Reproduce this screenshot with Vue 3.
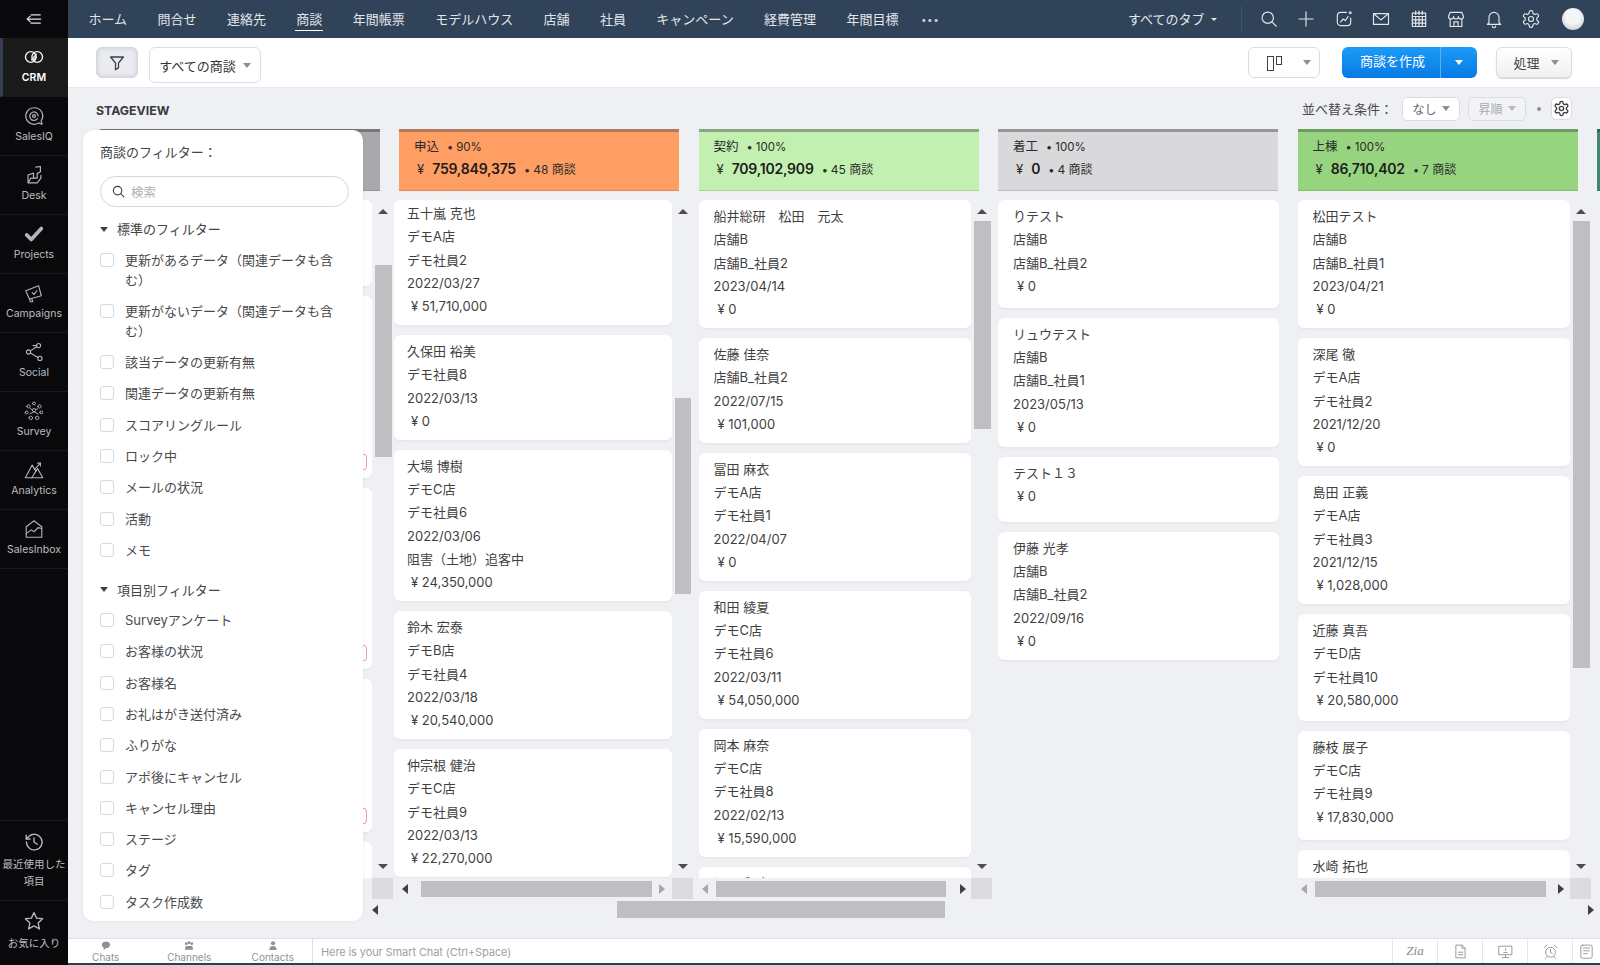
<script setup>
import { h } from 'vue'

const c = (x, y, r) => `M${x - r} ${y}a${r} ${r} 0 1 0 ${2 * r} 0a${r} ${r} 0 1 0 ${-2 * r} 0z`

const icons = {
  menu: ['M4 12h16', 'M7.5 8.5L4 12l3.5 3.5', 'M8.5 7h11', 'M8.5 17h11'],
  crm: [c(8.5, 12, 5.8), c(15.5, 12, 5.8), 'M9.5 15l5-6', 'M11.5 15.5l3-3.5'],
  salesiq: ['M12 3a9 9 0 1 0 5 16.5l3.8 1.5-1-3.8A9 9 0 0 0 12 3z', 'M15.8 14.8a4.6 4.6 0 1 1 .8-2.8', c(12, 12, 1.6)],
  desk: ['M14 3.5l5-.8v5.8l-3.5 2v5H8.5l-3 5h10l4-5v-3', 'M5.5 20v-8l6-2v5'],
  projects: ['M4 13l5 5L20 6'],
  campaigns: ['M3 9.5L17 4l3 11-13 3.5z', 'M7 18.5l1 3h2.5l-1-3.6', 'M10 11.5l2 2 3.2-4'],
  social: [c(17, 5, 2.3), c(6, 12, 2.3), c(18.5, 19, 2.3), 'M8 10.8l7-4.6', 'M8.2 13l8.2 5', 'M14.7 5H11'],
  survey: [c(12, 3.8, 1.6), c(6, 7, 1.8), c(18, 7, 1.8), c(4, 13.5, 1.6), c(20, 13.5, 1.6), c(8.5, 19.5, 1.9), c(15.5, 19.5, 1.9), c(12, 11, 1.8), 'M7.5 15l4.5-2 4.5 2', 'M8 9.5l2 1M16 9.5l-2 1'],
  analytics: ['M2.5 20.5L10 6.5l4 7 2-3 5.5 10z', 'M14 13.5l-4.5 7', 'M12.5 11.5L19 4.5', 'M16 4.5h3v3'],
  salesinbox: ['M3.5 21V9.5L12 3l8.5 6.5V21z', 'M3.5 17l5.5-4 3 2 4.5-4.5 4 1'],
  recent: ['M3.8 12a8.5 8.5 0 1 0 2.6-6L3.5 8.6', 'M3.5 4.5v4.2h4.2', 'M12 7.5V12l3.5 2.5'],
  star: ['M12 2.8l2.8 6.1 6.6.7-4.9 4.5 1.4 6.6L12 17.4l-5.9 3.3 1.4-6.6L2.6 9.6l6.6-.7z'],
  search: [c(10.5, 10.5, 6.8), 'M15.5 15.5l5.2 5.2'],
  plus: ['M12 3.5v17', 'M3.5 12h17'],
  signal: ['M20 11v5a4 4 0 0 1-4 4H8a4 4 0 0 1-4-4V8a4 4 0 0 1 4-4h7', 'M8 15.5l3-3.5 2.5 2L17 9', c(19.5, 4.5, 1.2)],
  mail: ['M3 5.5h18v13H3z', 'M3.5 6l8.5 7 8.5-7'],
  calendar: ['M4 5h16v16H4z', 'M4 9h16', 'M8 2.5v4M12 2.5v4M16 2.5v4', 'M8 9v12M12 9v12M16 9v12', 'M4 13h16M4 17h16'],
  store: ['M5 4h14l2 5a3 3 0 0 1-6 0 3 3 0 0 1-6 0 3 3 0 0 1-6 0z', 'M5 12v9h14v-9', 'M9.5 21v-5.5h5V21'],
  bell: ['M6 16.5V10a6 6 0 0 1 12 0v6.5l2 2H4z', 'M10 20.5a2 2 0 0 0 4 0'],
  gear: ['M12.22 2h-.44a2 2 0 0 0-2 2v.18a2 2 0 0 1-1 1.73l-.43.25a2 2 0 0 1-2 0l-.15-.08a2 2 0 0 0-2.73.73l-.22.38a2 2 0 0 0 .73 2.73l.15.1a2 2 0 0 1 1 1.72v.51a2 2 0 0 1-1 1.74l-.15.09a2 2 0 0 0-.73 2.73l.22.38a2 2 0 0 0 2.73.73l.15-.08a2 2 0 0 1 2 0l.43.25a2 2 0 0 1 1 1.73V20a2 2 0 0 0 2 2h.44a2 2 0 0 0 2-2v-.18a2 2 0 0 1 1-1.73l.43-.25a2 2 0 0 1 2 0l.15.08a2 2 0 0 0 2.73-.73l.22-.39a2 2 0 0 0-.73-2.73l-.15-.08a2 2 0 0 1-1-1.74v-.5a2 2 0 0 1 1-1.74l.15-.09a2 2 0 0 0 .73-2.73l-.22-.38a2 2 0 0 0-2.73-.73l-.15.08a2 2 0 0 1-2 0l-.43-.25a2 2 0 0 1-1-1.73V4a2 2 0 0 0-2-2z', c(12, 12, 3)],
  funnel: ['M3.5 4h17l-6.5 8v6.5L10 21v-9z'],
  chats: ['M12 3c5 0 9 3.2 9 7.5S17 18 12 18l-5 3.5V17c-2.500-1.300-4-3.700-4-6.500C3 6.200 7 3 12 3z'],
  channels: [c(6, 8, 3), c(18, 8, 3), c(12, 6, 3.2), 'M5 13h14l2 8H3z'],
  contacts: [c(12, 7, 4.5), 'M4 22c0-6 3-9 8-9s8 3 8 9z'],
  doc: ['M6 3h8l4.500 4.500V21H6z', 'M14 3v4.500h4.500', 'M9 13h6.500M9 16.500h6.500'],
  screen: ['M3 4.500h18v12H3z', 'M12 16.500V20M7.500 20.500h9', 'M9.500 13.500h5', 'M12 8v2.500'],
  alarm: [c(12, 13, 7), 'M12 9v4.200l2.500 1.500', 'M3.500 6l3.500-3M20.500 6L17 3', 'M7 19l-2 2.500M17 19l2 2.500'],
  notes: ['M6.500 3h11a2.500 2.500 0 0 1 2.500 2.500V19a2.500 2.500 0 0 1-2.500 2.500h-11A2.500 2.500 0 0 1 4 19V5.500A2.500 2.500 0 0 1 6.500 3z', 'M7.500 7h9', 'M8 11h8M8 15h5'],
}

const Icon = (props) =>
  h(
    'svg',
    {
      viewBox: '0 0 24 24',
      fill: props.solid ? 'currentColor' : 'none',
      stroke: props.solid ? 'none' : 'currentColor',
      'stroke-width': props.sw || 1.5,
      'stroke-linecap': 'round',
      'stroke-linejoin': 'round',
    },
    icons[props.name].map((d) => h('path', { d })),
  )
Icon.props = ['name', 'sw', 'solid']

const sideItems = [
  { label: 'CRM', icon: 'crm', active: true },
  { label: 'SalesIQ', icon: 'salesiq', sw: 1.3 },
  { label: 'Desk', icon: 'desk', sw: 1.3 },
  { label: 'Projects', icon: 'projects', sw: 4 },
  { label: 'Campaigns', icon: 'campaigns', sw: 1.2 },
  { label: 'Social', icon: 'social', sw: 1.2 },
  { label: 'Survey', icon: 'survey', sw: 1 },
  { label: 'Analytics', icon: 'analytics', sw: 1.2 },
  { label: 'SalesInbox', icon: 'salesinbox', sw: 1.2 },
]

const navLinks = ['ホーム', '問合せ', '連絡先', '商談', '年間帳票', 'モデルハウス', '店舗', '社員', 'キャンペーン', '経費管理', '年間目標']
const navIcons = ['search', 'plus', 'signal', 'mail', 'calendar', 'store', 'bell', 'gear']

const standardFilters = [
  '更新があるデータ（関連データも含む）',
  '更新がないデータ（関連データも含む）',
  '該当データの更新有無',
  '関連データの更新有無',
  'スコアリングルール',
  'ロック中',
  'メールの状況',
  '活動',
  'メモ',
]
const fieldFilters = ['Surveyアンケート', 'お客様の状況', 'お客様名', 'お礼はがき送付済み', 'ふりがな', 'アポ後にキャンセル', 'キャンセル理由', 'ステージ', 'タグ', 'タスク作成数']

const columns = [
  {
    id: 'prev',
    tone: 'gray-dark',
    spacers: [
      { height: 86 },
      { height: 182, tag: true },
      { height: 181, tag: true },
      { height: 153, tag: true },
      { height: 60 },
    ],
    thumb: { top: 65, height: 192 },
    cornerOnly: true,
  },
  {
    id: 'apply',
    name: '申込',
    pct: '90%',
    total: '759,849,375',
    count: '48 商談',
    tone: 'orange',
    scrolled: true,
    thumb: { top: 198, height: 196 },
    hbar: { pad: 8, gap: 13, width: 231, right: 7, dimRight: true },
    cards: [
      { rows: ['五十嵐 克也', 'デモA店', 'デモ社員2', '2022/03/27', '¥ 51,710,000'], trim: 3 },
      { rows: ['久保田 裕美', 'デモ社員8', '2022/03/13', '¥ 0'] },
      { rows: ['大場 博樹', 'デモC店', 'デモ社員6', '2022/03/06', '阻害（土地）追客中', '¥ 24,350,000'] },
      { rows: ['鈴木 宏泰', 'デモB店', 'デモ社員4', '2022/03/18', '¥ 20,540,000'] },
      { rows: ['仲宗根 健治', 'デモC店', 'デモ社員9', '2022/03/13', '¥ 22,270,000'] },
    ],
  },
  {
    id: 'contract',
    name: '契約',
    pct: '100%',
    total: '709,102,909',
    count: '45 商談',
    tone: 'green-light',
    thumb: { top: 21, height: 208 },
    hbar: { pad: 3, gap: 8, width: 230, right: 14, dimLeft: true },
    cards: [
      { rows: ['船井総研　松田　元太', '店舗B', '店舗B_社員2', '2023/04/14', '¥ 0'] },
      { rows: ['佐藤 佳奈', '店舗B_社員2', '2022/07/15', '¥ 101,000'] },
      { rows: ['冨田 麻衣', 'デモA店', 'デモ社員1', '2022/04/07', '¥ 0'] },
      { rows: ['和田 綾夏', 'デモC店', 'デモ社員6', '2022/03/11', '¥ 54,050,000'] },
      { rows: ['岡本 麻奈', 'デモC店', 'デモ社員8', '2022/02/13', '¥ 15,590,000'] },
      { rows: ['深田 和也'] },
    ],
  },
  {
    id: 'start',
    name: '着工',
    pct: '100%',
    total: '0',
    count: '4 商談',
    tone: 'gray',
    cards: [
      { rows: ['りテスト', '店舗B', '店舗B_社員2', '¥ 0'], extra: 3 },
      { rows: ['リュウテスト', '店舗B', '店舗B_社員1', '2023/05/13', '¥ 0'], extra: 1 },
      { rows: ['テスト１３', '¥ 0'], extra: 7 },
      { rows: ['伊藤 光孝', '店舗B', '店舗B_社員2', '2022/09/16', '¥ 0'] },
    ],
  },
  {
    id: 'done',
    name: '上棟',
    pct: '100%',
    total: '86,710,402',
    count: '7 商談',
    tone: 'green',
    thumb: { top: 21, height: 447 },
    hbar: { pad: 3, gap: 8, width: 231, right: 12, dimLeft: true },
    cards: [
      { rows: ['松田テスト', '店舗B', '店舗B_社員1', '2023/04/21', '¥ 0'] },
      { rows: ['深尾 徹', 'デモA店', 'デモ社員2', '2021/12/20', '¥ 0'] },
      { rows: ['島田 正義', 'デモA店', 'デモ社員3', '2021/12/15', '¥ 1,028,000'] },
      { rows: ['近藤 真吾', 'デモD店', 'デモ社員10', '¥ 20,580,000'], extra: 2 },
      { rows: ['藤枝 展子', 'デモC店', 'デモ社員9', '¥ 17,830,000'], extra: 5 },
      { rows: ['水崎 拓也', 'デモA店'] },
    ],
  },
  { id: 'next', tone: 'teal' },
]

const chatTabs = [
  { label: 'Chats', icon: 'chats' },
  { label: 'Channels', icon: 'channels' },
  { label: 'Contacts', icon: 'contacts' },
]
const chatTools = ['doc', 'screen', 'alarm', 'notes']

function cardStyle(card) {
  const style = {}
  if (card.trim) style.paddingTop = 5 - card.trim + 'px'
  if (card.extra) style.paddingBottom = 6.5 + card.extra + 'px'
  return style
}
</script>

<template>
  <div class="app">
    <aside class="sidebar">
      <div class="side-top"><Icon name="menu" class="side-menu" /></div>
      <div v-for="item in sideItems" :key="item.label" :class="['side-item', { active: item.active }]">
        <Icon :name="item.icon" :sw="item.sw" class="side-icon" />
        <span>{{ item.label }}</span>
      </div>
      <div class="side-bottom">
        <div class="side-recent">
          <Icon name="recent" class="side-icon" />
          <span>最近使用した<br />項目</span>
        </div>
        <div class="side-fav">
          <Icon name="star" class="side-icon star" />
          <span>お気に入り</span>
        </div>
      </div>
    </aside>

    <div class="main">
      <header class="topnav">
        <nav class="nav-links">
          <a v-for="link in navLinks" :key="link" :class="{ current: link === '商談' }">{{ link }}</a>
          <a class="nav-more">•••</a>
        </nav>
        <div class="nav-tabs">すべてのタブ<i class="caret caret-light"></i></div>
        <div class="nav-icons">
          <Icon v-for="name in navIcons" :key="name" :name="name" :sw="1.4" class="nav-icon" />
        </div>
        <div class="avatar"></div>
      </header>

      <div class="toolbar">
        <button class="btn-filter"><Icon name="funnel" :sw="1.7" /></button>
        <button class="btn-view-select">すべての商談<i class="caret"></i></button>
        <div class="toolbar-right">
          <button class="btn-layout">
            <span class="layout-tall"></span><span class="layout-short"></span>
            <i class="caret"></i>
          </button>
          <div class="btn-create">
            <span class="create-label">商談を作成</span>
            <span class="create-drop"><i class="caret caret-white"></i></span>
          </div>
          <button class="btn-action">処理<i class="caret"></i></button>
        </div>
      </div>

      <section class="stage">
        <div class="stage-head">
          <h1>STAGEVIEW</h1>
          <div class="sort">
            <span class="sort-label">並べ替え条件：</span>
            <span class="sort-box">なし<i class="caret"></i></span>
            <span class="sort-box disabled">昇順<i class="caret"></i></span>
            <span class="sort-dot"></span>
            <span class="sort-gear"><Icon name="gear" :sw="1.9" /></span>
          </div>
        </div>

        <div class="board">
          <div v-for="col in columns" :key="col.id" class="column">
            <div :class="['col-head', col.tone]">
              <template v-if="col.name">
                <div class="col-name">{{ col.name }}<span class="dot-meta">•</span><span class="col-pct">{{ col.pct }}</span></div>
                <div class="col-total">
                  <span class="yen">¥</span><b>{{ col.total }}</b><span class="dot-meta">•</span><span class="col-count">{{ col.count }}</span>
                </div>
              </template>
            </div>

            <template v-if="col.cards || col.spacers">
              <div :class="['col-body', { scrolled: col.scrolled, full: !col.thumb }]">
                <div class="card-list">
                  <template v-if="col.spacers">
                    <div v-for="(s, i) in col.spacers" :key="i" class="card" :style="{ height: s.height + 'px' }">
                      <span v-if="s.tag" class="card-tag"></span>
                    </div>
                  </template>
                  <div v-for="card in col.cards" :key="card.rows[0]" class="card" :style="cardStyle(card)">
                    <div v-for="row in card.rows" :key="row" :class="['card-row', { amount: row[0] === '¥' }]">{{ row }}</div>
                  </div>
                </div>
                <div v-if="col.thumb" class="vbar">
                  <i class="tri-up"></i>
                  <span class="vbar-thumb" :style="{ top: col.thumb.top + 'px', height: col.thumb.height + 'px' }"></span>
                  <i class="tri-down"></i>
                </div>
              </div>
              <div v-if="col.thumb" :class="['hbar', { scrolled: col.scrolled }]">
                <div v-if="col.hbar" class="hbar-track" :style="{ paddingLeft: col.hbar.pad + 'px' }">
                  <i :class="['tri-left', { dim: col.hbar.dimLeft }]"></i>
                  <span class="hbar-thumb" :style="{ marginLeft: col.hbar.gap + 'px', width: col.hbar.width + 'px' }"></span>
                  <i :class="['tri-right', { dim: col.hbar.dimRight }]" :style="{ marginLeft: col.hbar.right + 'px' }"></i>
                </div>
                <div v-else class="hbar-track"></div>
                <span class="hbar-corner"></span>
              </div>
            </template>
          </div>
        </div>

        <div class="board-scroll">
          <i class="tri-left"></i>
          <span class="board-thumb"></span>
          <i class="tri-right board-next"></i>
        </div>

        <aside class="filter-panel">
          <div class="filter-title">商談のフィルター：</div>
          <div class="filter-search">
            <Icon name="search" :sw="1.8" />
            <span>検索</span>
          </div>
          <div class="filter-group"><i class="tri-down"></i>標準のフィルター</div>
          <label v-for="f in standardFilters" :key="f" class="filter-row">
            <span class="check"></span><span class="filter-text">{{ f }}</span>
          </label>
          <div class="filter-group second"><i class="tri-down"></i>項目別フィルター</div>
          <label v-for="f in fieldFilters" :key="f" class="filter-row">
            <span class="check"></span><span class="filter-text">{{ f }}</span>
          </label>
        </aside>
      </section>

      <footer class="chatbar">
        <div class="chat-tabs">
          <div v-for="tab in chatTabs" :key="tab.label" class="chat-tab">
            <Icon :name="tab.icon" :solid="true" />
            <span>{{ tab.label }}</span>
          </div>
        </div>
        <div class="chat-input">Here is your Smart Chat (Ctrl+Space)</div>
        <div class="chat-tool zia">Zia</div>
        <div v-for="name in chatTools" :key="name" class="chat-tool">
          <Icon :name="name" :sw="1.2" />
        </div>
      </footer>
    </div>
  </div>
</template>

<style>
html,
body {
  margin: 0;
  background: #eff0f3;
}
</style>

<style scoped>
.app {
  display: flex;
  width: 1600px;
  height: 965px;
  overflow: hidden;
  font-family: Inter, "Noto Sans CJK JP", sans-serif;
  font-size: 13px;
  color: #3f3f42;
}
h1,
button {
  margin: 0;
  font-family: inherit;
}
i {
  display: inline-block;
}

/* side rail */
.sidebar {
  width: 68px;
  flex-shrink: 0;
  display: flex;
  flex-direction: column;
  background: #09090b;
  color: #bdbdc3;
  font-size: 10.5px;
}
.side-top {
  height: 38px;
  display: flex;
  align-items: center;
  justify-content: center;
}
.side-menu {
  width: 20px;
  height: 20px;
  color: #e2e2e6;
}
.side-item {
  height: 59px;
  box-sizing: border-box;
  padding-top: 8px;
  display: flex;
  flex-direction: column;
  align-items: center;
  gap: 3px;
  border-bottom: 1px solid #18181b;
  line-height: 14px;
}
.side-item.active {
  background: #1a1a1b;
  border-left: 3px solid #333e52;
  color: #fff;
  font-weight: 600;
  padding-right: 3px;
}
.side-icon {
  width: 22px;
  height: 22px;
  color: #b4b4ba;
}
.side-item.active .side-icon {
  color: #f2f2f2;
}
.side-bottom {
  margin-top: auto;
  text-align: center;
  font-size: 10.5px;
}
.side-recent {
  height: 81px;
  box-sizing: border-box;
  padding-top: 10px;
  border-top: 1px solid #18181b;
  border-bottom: 1px solid #18181b;
  display: flex;
  flex-direction: column;
  align-items: center;
  line-height: 17px;
  gap: 3px;
}
.side-fav {
  height: 64px;
  box-sizing: border-box;
  padding-top: 9px;
  display: flex;
  flex-direction: column;
  align-items: center;
  gap: 3px;
}
.star {
  width: 22px;
  height: 22px;
}

.main {
  flex: 1;
  min-width: 0;
  display: flex;
  flex-direction: column;
}

/* top nav */
.topnav {
  height: 38px;
  flex-shrink: 0;
  display: flex;
  align-items: center;
  padding-left: 20.5px;
  background: #304358;
  color: #e2e6eb;
}
.nav-links {
  display: flex;
  gap: 30.4px;
}
.nav-links a {
  position: relative;
  line-height: 20px;
}
.nav-links a.current::after {
  content: "";
  position: absolute;
  left: -1px;
  right: -1px;
  bottom: -2px;
  height: 1px;
  background: #fff;
}
.nav-more {
  margin-left: -8px;
  font-size: 10px;
  letter-spacing: 0.5px;
  color: #c5ccd4;
}
.nav-tabs {
  margin-left: auto;
  padding-right: 24px;
  border-right: 1px solid #3f5267;
  line-height: 26px;
  display: flex;
  align-items: center;
  gap: 6px;
}
.nav-icons {
  display: flex;
  gap: 17.5px;
  margin-left: 17px;
}
.nav-icon {
  width: 20px;
  height: 20px;
}
.avatar {
  width: 22px;
  height: 22px;
  margin: 0 16px 0 21px;
  border-radius: 50%;
  background: radial-gradient(circle at 50% 40%, #f4f5f7 40%, #b9c0ca 100%);
}

/* carets */
.caret {
  width: 0;
  height: 0;
  border-left: 4.5px solid transparent;
  border-right: 4.5px solid transparent;
  border-top: 5px solid #8e8e92;
}
.caret-light {
  border-left-width: 3px;
  border-right-width: 3px;
  border-top: 3.5px solid #e2e6eb;
}
.caret-white {
  border-top-color: #fff;
}

/* toolbar */
.toolbar {
  height: 50px;
  flex-shrink: 0;
  box-sizing: border-box;
  padding: 9px 28px 0;
  display: flex;
  align-items: flex-start;
  background: #fff;
  border-bottom: 1px solid #e6e7ea;
}
.btn-filter {
  width: 42px;
  height: 31px;
  padding: 0;
  border: 1px solid #d4d6db;
  border-radius: 6px;
  background: #e9ebf0;
  box-shadow: inset 0 0 4px #c6c9d0;
  color: #3c3f46;
  display: flex;
  align-items: center;
  justify-content: center;
}
.btn-filter svg {
  width: 18px;
  height: 18px;
}
.btn-view-select {
  margin-left: 11px;
  width: 112px;
  height: 36px;
  padding: 0;
  box-sizing: border-box;
  border: 1px solid #dcdde1;
  border-radius: 6px;
  background: #fff;
  color: #333;
  font-size: 13px;
  display: flex;
  align-items: center;
  justify-content: center;
  gap: 7px;
}
.toolbar-right {
  margin-left: auto;
  display: flex;
}
.btn-layout {
  width: 72px;
  height: 31px;
  padding: 0 8px 0 18px;
  border: 1px solid #dcdde1;
  border-radius: 6px;
  background: #fff;
  display: flex;
  align-items: flex-start;
  gap: 2px;
}
.layout-tall {
  width: 5px;
  height: 13px;
  margin-top: 8px;
  border: 1.2px solid #3f3f42;
}
.layout-short {
  width: 4px;
  height: 7px;
  margin-top: 8px;
  border: 1.2px solid #3f3f42;
}
.btn-layout .caret {
  margin: 12px 0 0 auto;
  margin-right: 0;
}
.btn-create {
  margin-left: 22px;
  width: 135px;
  height: 31px;
  display: flex;
  border-radius: 6px;
  background: linear-gradient(#1b9cf6, #0879e6);
  color: #fff;
  overflow: hidden;
}
.create-label {
  width: 99px;
  box-sizing: border-box;
  padding-left: 3px;
  text-align: center;
  line-height: 29px;
  border-right: 1px solid #56b0f3;
}
.create-drop {
  flex: 1;
  display: flex;
  align-items: center;
  justify-content: center;
}
.btn-action {
  margin-left: 19px;
  width: 76px;
  height: 31px;
  padding: 0 0 0 4px;
  border: 1px solid #dcdde1;
  border-radius: 6px;
  background: linear-gradient(#fff, #f0f0f2);
  box-shadow: 0 1px 1px #d5d5d8;
  color: #444;
  font-size: 13px;
  display: flex;
  align-items: center;
  justify-content: center;
  gap: 11px;
}

/* stage */
.stage {
  position: relative;
  flex: 1;
  min-height: 0;
  display: flex;
  flex-direction: column;
  background: #eff0f3;
}
.stage-head {
  height: 41px;
  flex-shrink: 0;
  box-sizing: border-box;
  padding: 0 28px 0 28px;
  display: flex;
  align-items: center;
}
.stage-head h1 {
  font-size: 12.3px;
  font-weight: 700;
  color: #3a3a3d;
  margin-top: 4px;
}
.sort {
  margin-left: auto;
  display: flex;
  align-items: center;
  color: #4a4a4d;
}
.sort-label {
  width: 100px;
}
.sort-box {
  width: 58px;
  height: 24px;
  box-sizing: border-box;
  margin-right: 8px;
  border: 1px solid #dcdde1;
  border-radius: 5px;
  background: #fff;
  font-size: 12px;
  color: #666;
  display: flex;
  align-items: center;
  justify-content: center;
  gap: 5px;
}
.sort-box.disabled {
  background: #f2f3f5;
  color: #a9a9ad;
  margin-right: 11px;
}
.sort-box.disabled .caret {
  border-top-color: #b9b9bd;
}
.sort-dot {
  width: 4px;
  height: 4px;
  background: #8e8e92;
  border-radius: 50%;
  margin-right: 10px;
}
.sort-gear {
  width: 21px;
  height: 23px;
  box-sizing: border-box;
  border: 1px solid #dcdde1;
  border-radius: 5px;
  background: #fff;
  color: #3a3a3d;
  display: flex;
  align-items: center;
  justify-content: center;
}
.sort-gear svg {
  width: 17px;
  height: 17px;
}

/* board */
.board {
  height: 770px;
  flex-shrink: 0;
  padding-left: 31.5px;
  display: flex;
  gap: 6px;
  overflow: hidden;
}
.column {
  width: 293.5px;
  flex-shrink: 0;
}
.col-head {
  width: 280px;
  height: 62px;
  box-sizing: border-box;
  padding: 4px 0 0 15px;
  border-top: 3px solid #000;
  border-bottom: 1px solid rgba(0, 0, 0, 0.12);
  color: #2b2b2b;
  margin-bottom: 9px;
}
.gray-dark {
  background: #a9a9ad;
  border-top-color: #77777c;
}
.orange {
  background: #ff9e63;
  border-top-color: #af7a5c;
}
.green-light {
  background: #c1f0b0;
  border-top-color: #8aa484;
}
.gray {
  background: #d9d9db;
  border-top-color: #97979a;
}
.green {
  background: #97d480;
  border-top-color: #6f9a64;
}
.teal {
  background: #3f8677;
  border-top-color: #2f6559;
}
.col-name {
  font-size: 12.5px;
  line-height: 21px;
}
.col-pct {
  font-size: 11.5px;
}
.col-total {
  line-height: 22px;
  font-size: 12px;
  display: flex;
  align-items: baseline;
}
.col-total b {
  font-size: 14px;
  font-weight: 600;
  letter-spacing: -0.2px;
  color: #1c1c1c;
}
.yen {
  margin: 0 8px 0 3px;
  font-size: 13px;
}
.dot-meta {
  margin: 0 3px 0 8px;
  font-size: 11px;
}
.col-body {
  display: flex;
  height: 678px;
}
.col-body.scrolled {
  margin-left: -5px;
}
.col-body.scrolled .card {
  padding-left: 13px;
}
.col-body.full {
  width: 281px;
}
.card-list {
  flex: 1;
  min-width: 0;
  display: flex;
  flex-direction: column;
  gap: 10px;
  overflow: hidden;
}
.card {
  position: relative;
  flex-shrink: 0;
  box-sizing: border-box;
  padding: 5px 8px 6.5px 15px;
  background: #fff;
  border-radius: 6px;
  box-shadow: 0 1px 3px rgba(0, 0, 0, 0.06);
}
.card-row {
  line-height: 23.3px;
  white-space: nowrap;
  overflow: hidden;
}
.card-row.amount {
  padding-left: 4px;
}
.card-tag {
  position: absolute;
  right: 5px;
  bottom: 8px;
  width: 16px;
  height: 14px;
  border: 1px solid #e6a3ad;
  border-radius: 3px;
}
.vbar {
  position: relative;
  width: 21px;
  flex-shrink: 0;
}
.vbar-thumb {
  position: absolute;
  left: 3px;
  width: 16.5px;
  background: #bfbfc1;
}
.tri-up {
  position: absolute;
  top: 9px;
  left: 6px;
  width: 0;
  height: 0;
  border-left: 5px solid transparent;
  border-right: 5px solid transparent;
  border-bottom: 5px solid #4d4d50;
}
.vbar .tri-down {
  position: absolute;
  left: 6px;
  bottom: 9px;
}
.tri-down {
  width: 0;
  height: 0;
  border-left: 5px solid transparent;
  border-right: 5px solid transparent;
  border-top: 5px solid #4d4d50;
}
.hbar {
  display: flex;
  height: 21px;
}
.hbar.scrolled {
  margin-left: -5px;
}
.hbar-track {
  flex: 1;
  min-width: 0;
  display: flex;
  align-items: center;
}
.hbar-corner {
  width: 21px;
  flex-shrink: 0;
  background: #dcdcdf;
}
.hbar-thumb {
  width: 230px;
  height: 16px;
  background: #bfbfc1;
}
.tri-left {
  width: 0;
  height: 0;
  border-top: 5px solid transparent;
  border-bottom: 5px solid transparent;
  border-right: 6px solid #3f3f42;
}
.tri-right {
  width: 0;
  height: 0;
  border-top: 5px solid transparent;
  border-bottom: 5px solid transparent;
  border-left: 6px solid #3f3f42;
}
.tri-left.dim {
  border-right-color: #a9a9ad;
}
.tri-right.dim {
  border-left-color: #a9a9ad;
}
.board-scroll {
  height: 17px;
  flex-shrink: 0;
  margin-top: 2px;
  padding: 0 6px 0 304px;
  display: flex;
  align-items: center;
}
.board-thumb {
  margin-left: 239px;
  width: 328px;
  height: 17px;
  background: #bfbfc1;
}
.board-next {
  margin-left: auto;
}

/* filter panel */
.filter-panel {
  position: absolute;
  left: 15px;
  top: 42px;
  width: 280px;
  height: 791px;
  box-sizing: border-box;
  padding: 12px 24px 0 17px;
  background: #fff;
  border-radius: 10px;
  box-shadow: 0 0 4px rgba(0, 0, 0, 0.06);
  z-index: 2;
  overflow: hidden;
}
.filter-title {
  line-height: 20px;
  color: #444;
}
.filter-search {
  margin: 14px -10px 0 0;
  height: 31px;
  box-sizing: border-box;
  padding-left: 10px;
  border: 1px solid #d5d5d9;
  border-radius: 16px;
  display: flex;
  align-items: center;
  gap: 5px;
  color: #b0b0b4;
  font-size: 12.5px;
}
.filter-search svg {
  width: 15px;
  height: 15px;
  color: #3f3f42;
}
.filter-group {
  margin: 12px 0 5px;
  line-height: 20px;
  color: #444;
  display: flex;
  align-items: center;
  gap: 9px;
}
.filter-group.second {
  margin-top: 14px;
}
.filter-group .tri-down {
  border-left-width: 4px;
  border-right-width: 4px;
  border-top-color: #3f3f42;
}
.filter-row {
  display: flex;
  align-items: flex-start;
  gap: 11px;
  padding: 5.65px 0;
  line-height: 20px;
  color: #4a4a4d;
}
.check {
  width: 14px;
  height: 14px;
  flex-shrink: 0;
  margin-top: 3px;
  box-sizing: border-box;
  border: 1.5px solid #d8d8dc;
  border-radius: 3px;
}
.filter-text {
  width: 214px;
  flex-shrink: 0;
}

/* bottom chat bar */
.chatbar {
  height: 27px;
  flex-shrink: 0;
  box-sizing: border-box;
  display: flex;
  background: #fff;
  border-top: 1px solid #dfe0e3;
  border-bottom: 2px solid #1f4452;
  overflow: hidden;
}
.chat-tabs {
  width: 245px;
  flex-shrink: 0;
  display: flex;
  border-right: 1px solid #e0e0e3;
  box-sizing: border-box;
}
.chat-tab {
  width: 83.5px;
  flex-shrink: 0;
  display: flex;
  flex-direction: column;
  align-items: center;
  color: #8f8f94;
  font-size: 10px;
  line-height: 12px;
  padding-top: 1px;
}
.chat-tab:first-child {
  margin-left: -4px;
}
.chat-tab svg {
  width: 16px;
  height: 16px;
}
.chat-input {
  flex: 1;
  padding-left: 8px;
  line-height: 26px;
  font-size: 11px;
  letter-spacing: -0.1px;
  color: #a0a0a5;
}
.chat-tool {
  width: 45px;
  flex-shrink: 0;
  box-sizing: border-box;
  border-left: 1px solid #e6e6e9;
  display: flex;
  align-items: center;
  justify-content: center;
  color: #8a8a90;
}
.chat-tool:last-child {
  width: 28px;
}
.chat-tool svg {
  width: 17px;
  height: 17px;
}
.zia {
  font-family: "Liberation Serif", serif;
  font-style: italic;
  font-size: 13px;
}
</style>
